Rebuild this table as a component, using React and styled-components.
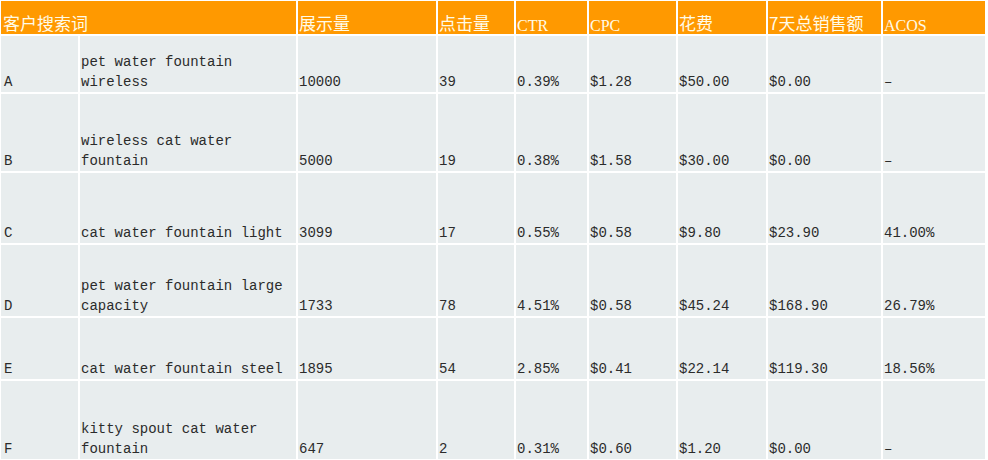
import React from "react";
import styled, { createGlobalStyle } from "styled-components";

const Global = createGlobalStyle`
  html, body { margin: 0; padding: 0; background: #ffffff; }
  body { font-family: "Liberation Mono", "Noto Sans CJK SC", monospace; }
`;

const Table = styled.div`
  display: grid;
  grid-template-columns: 77px 216px 138px 76px 71px 87px 88px 113px 102px;
  grid-template-rows: 33px 56px 77px 70px 71px 61px 78px;
  gap: 2px;
  padding: 1px 0 0 1px;
  background: #ffffff;
`;

const HeadCell = styled.div`
  grid-column: span ${(p) => p.$span || 1};
  background: #ff9900;
  color: #fffbe8;
  display: flex;
  align-items: flex-end;
  padding: 0 0 0 ${(p) => (p.$first ? "2px" : "1px")};
  font-family: ${(p) =>
    p.$latin
      ? `"Liberation Serif", "Noto Sans CJK SC", serif`
      : `"Noto Sans CJK SC", sans-serif`};
  font-size: ${(p) => (p.$latin ? "16px" : "17px")};
  line-height: ${(p) => (p.$latin ? "17px" : "22px")};
  white-space: nowrap;
  overflow: hidden;
`;

const Cell = styled.div`
  background: #e8edee;
  color: #2b2b2b;
  display: flex;
  align-items: flex-end;
  padding: 0 1px 0 ${(p) => (p.$first ? "3px" : "1px")};
  font-family: "Liberation Mono", monospace;
  font-size: 14px;
  line-height: 20px;
  overflow: hidden;
`;

const headers = [
  { t: "客户搜索词", span: 2, first: true },
  { t: "展示量" },
  { t: "点击量" },
  { t: "CTR", latin: true },
  { t: "CPC", latin: true },
  { t: "花费" },
  { t: "7天总销售额" },
  { t: "ACOS", latin: true },
];

const rows = [
  ["A", "pet water fountain wireless", "10000", "39", "0.39%", "$1.28", "$50.00", "$0.00", "–"],
  ["B", "wireless cat water fountain", "5000", "19", "0.38%", "$1.58", "$30.00", "$0.00", "–"],
  ["C", "cat water fountain light", "3099", "17", "0.55%", "$0.58", "$9.80", "$23.90", "41.00%"],
  ["D", "pet water fountain large capacity", "1733", "78", "4.51%", "$0.58", "$45.24", "$168.90", "26.79%"],
  ["E", "cat water fountain steel", "1895", "54", "2.85%", "$0.41", "$22.14", "$119.30", "18.56%"],
  ["F", "kitty spout cat water fountain", "647", "2", "0.31%", "$0.60", "$1.20", "$0.00", "–"],
];

export default function App() {
  return (
    <>
      <Global />
      <Table>
        {headers.map((h) => (
          <HeadCell key={h.t} $span={h.span} $first={h.first} $latin={h.latin}>
            {h.t}
          </HeadCell>
        ))}
        {rows.map((r) =>
          r.map((v, i) => (
            <Cell key={r[0] + i} $first={i === 0}>
              <span>{v}</span>
            </Cell>
          ))
        )}
      </Table>
    </>
  );
}
